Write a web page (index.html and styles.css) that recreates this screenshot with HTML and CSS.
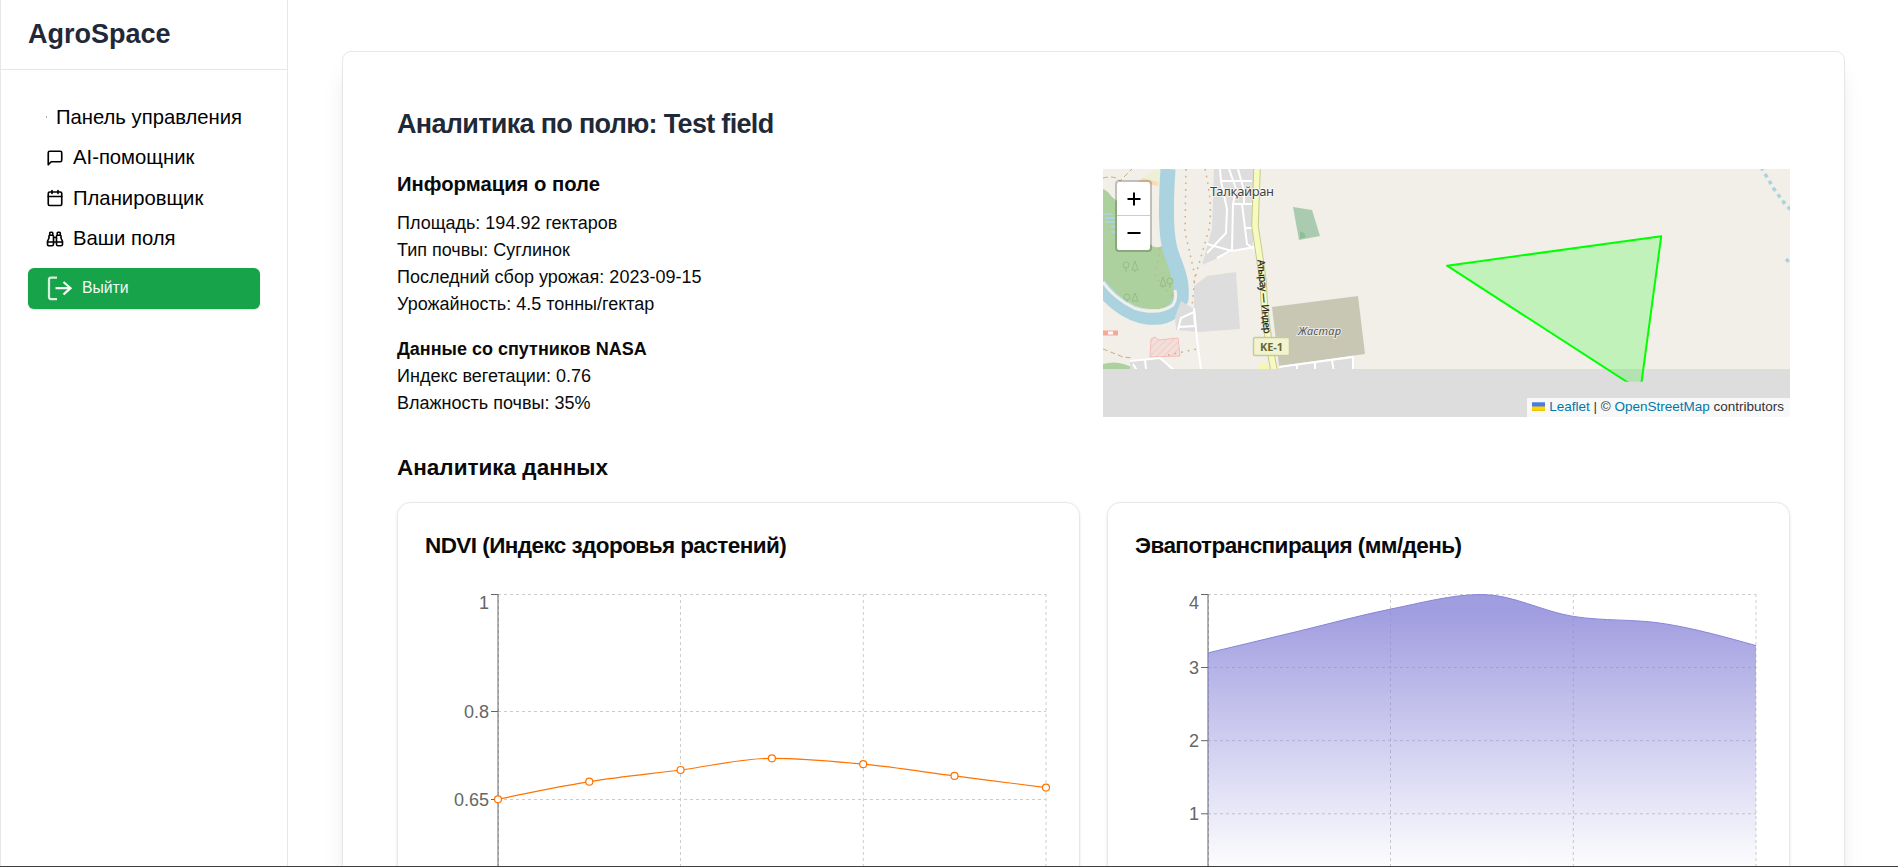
FILE: index.html
```html
<!DOCTYPE html>
<html lang="ru">
<head>
<meta charset="utf-8">
<title>AgroSpace</title>
<link rel="stylesheet" href="styles.css">
</head>
<body>
<div class="app">
  <aside class="sidebar">
    <div class="brand"><span>AgroSpace</span></div>
    <nav class="nav">
      <a class="nav-item"><i class="speck"></i><span>Панель управления</span></a>
      <a class="nav-item"><svg class="icon" viewBox="0 0 24 24"><path d="M21 15a2 2 0 0 1-2 2H7l-4 4V5a2 2 0 0 1 2-2h14a2 2 0 0 1 2 2z"/></svg><span>AI-помощник</span></a>
      <a class="nav-item"><svg class="icon" viewBox="0 0 24 24"><path d="M8 2v4M16 2v4M3 10h18"/><rect x="3" y="4" width="18" height="18" rx="2"/></svg><span>Планировщик</span></a>
      <a class="nav-item"><svg class="icon" viewBox="0 0 24 24"><path d="M10 10h4M19 7V4a1 1 0 0 0-1-1h-2a1 1 0 0 0-1 1v3M20 21a2 2 0 0 0 2-2v-3.851c0-1.39-2-2.962-2-4.829V8a1 1 0 0 0-1-1h-4a1 1 0 0 0-1 1v11a2 2 0 0 0 2 2zM22 16H2M4 21a2 2 0 0 1-2-2v-3.851c0-1.39 2-2.962 2-4.829V8a1 1 0 0 1 1-1h4a1 1 0 0 1 1 1v11a2 2 0 0 1-2 2zM9 7V4a1 1 0 0 0-1-1H6a1 1 0 0 0-1 1v3"/></svg><span>Ваши поля</span></a>
      <button class="logout"><svg viewBox="0 0 27 27"><path class="door" d="M11 2.500H5Q3 2.500 3 4.500V22Q3 24 5 24H11"/><path d="M9.500 13.200H24.500M17.500 7L24.500 13.200L17.500 19.500"/></svg><span>Выйти</span></button>
    </nav>
  </aside>
  <main class="main">
    <section class="card">
      <h1 class="title">Аналитика по полю: Test field</h1>
      <div class="top">
        <div class="info">
          <h2 class="info-title">Информация о поле</h2>
          <p>Площадь: 194.92 гектаров</p>
          <p>Тип почвы: Суглинок</p>
          <p>Последний сбор урожая: 2023-09-15</p>
          <p>Урожайность: 4.5 тонны/гектар</p>
          <h3 class="nasa">Данные со спутников NASA</h3>
          <p>Индекс вегетации: 0.76</p>
          <p>Влажность почвы: 35%</p>
        </div>
        <div class="map">
          <svg class="tiles" viewBox="0 0 687 248">
            <defs><clipPath id="tile"><rect width="687" height="200"/></clipPath><clipPath id="pane"><rect width="687" height="212.700"/></clipPath>
            <pattern id="hatch" width="5" height="5" patternUnits="userSpaceOnUse" patternTransform="rotate(45)"><rect width="5" height="5" fill="#f3dfda"/><path d="M0 0V5" stroke="#f0c8c3" stroke-width="1.500"/></pattern></defs>
            <rect width="687" height="248" fill="#ddd"/>
            <g clip-path="url(#tile)">
              <rect width="687" height="200" fill="#f2efe9"/>
              <path d="M0 20Q5 22 9 28L14 32L48 76Q52 80 59 77Q67 98 72 121Q73 133 62 139Q42 143 27 134Q9 126 0 113Z" fill="#add19e"/>
              <path d="M0 45H9M2 49H12M2 53H13M8 58H12M8 63H12" stroke="#aad3df" stroke-width="2"/>
              <path d="M36 11L52 1H65V13L55 17L35 13Z" fill="#eef0d5"/><path d="M35 13L40 9L55 13V17Z" fill="#fbd9b4"/>
              <path d="M65 0C63 30 62 62 67 80C72 98 80 108 78 130C70 150 54 149 44 148C23 145 9 131 -4 116" fill="none" stroke="#aad3df" stroke-width="15"/>
              <path d="M0 113Q10 128 31 139Q55 147 70 136Q74 130 72 121" fill="none" stroke="#f2efe9" stroke-width="3"/>
              <path d="M111 0H152V67L149 77L131 82L99 96L109 60Z" fill="#ddd"/>
              <path d="M91 117L104 107L133 103L137 160L96 163L73 161L72 148L78 132L91 140Z" fill="#dedddd"/>
              <path d="M190 38L209 41L217 67L196 71Z" fill="#aacbaf"/><path d="M197 62L201 64L203 68L197 70Z" fill="#8fbc9b"/>
              <path d="M169 138L255 127L262 185L176 197Z" fill="#c7c7b4"/>
              <path d="M0 195Q17 190 34 201H0Z" fill="#add19e"/><path d="M27 201V192L58 189L68 201ZM176 198L249 188L252 201H176Z" fill="#ddd"/>
              <path d="M48 170L52 168L56 171L75 169L77 187L47 188Z" fill="url(#hatch)" stroke="#f5beb9"/>
              <path d="M0 164H15" stroke="#f5a799" stroke-width="5"/><path d="M5 164H10" stroke="#fff" stroke-width="3"/>
              <g fill="none" stroke="#fff" stroke-width="2"><path d="M117 0L118 12L124 40L123 64L104 84M118 12H149M126 0L133 20L130 35L129 81L114 89M135 0L141 22V35H151M131 35H139L144 75L151 80M104 75L129 82L152 78M143 59H152M91 139L94 170L98 201M75 161L78 149L91 143L92 157L76 158ZM27 192L57 189L72 202M42 190L43 201M30 195L35 203M176 198L250 188V201M194 195V203M212 193V203M229 191L231 203"/></g>
              <g fill="none" stroke="#ccb08a" stroke-width="1.500" stroke-dasharray="1.700 5"><path d="M83 0L82 63L92 107L89 137M102 0Q110 35 106 60L90 116M57 79L52 108L70 128M65 186L94 180"/></g>
              <path d="M0 9Q12 6 17 12L29 0M0 180L20 188L30 189" fill="none" stroke="#c9aa85" stroke-dasharray="5 3"/>
              <path d="M154 0L152 57Q157 90 160 112Q162 160 171 201" fill="none" stroke="#c7ca8f" stroke-width="7.500"/><path d="M154 0L152 57Q157 90 160 112Q162 160 171 201" fill="none" stroke="#f7fabf" stroke-width="5.500"/>
              <rect x="157" y="195" width="7" height="8" fill="#f8f6a8"/>
              <g fill="none" stroke="#93bd86"><circle cx="23" cy="96" r="3"/><path d="M23 99V103M32 92L29 101H35ZM32 101V103"/><circle cx="67" cy="112" r="3"/><path d="M67 115V119M60 108L57 117H63ZM60 117V119"/><circle cx="24" cy="128" r="3"/><path d="M24 131V133M32 124L29 132H35Z"/></g>
              <path d="M658 -2L671 20L682 35L689 42M683 90L689 96" fill="none" stroke="#aad3df" stroke-width="3.500" stroke-dasharray="4 4"/>
              <g class="map-text"><text x="107" y="27" textLength="64" class="halo">Талқайран</text><text x="195" y="166" textLength="43" class="jastar">Жастар</text>
              <text transform="translate(154.500 91) rotate(85)" textLength="74" class="road">Атырау — Индер</text></g>
              <rect x="150.500" y="168.500" width="36" height="18" rx="1.500" fill="#f2f3d3" stroke="#c8cc94" stroke-width="1.500"/><text x="157" y="182" textLength="23" class="ref">KE-1</text>
            </g>
            <g clip-path="url(#pane)"><polygon class="field" points="344,96.700 558.200,67.300 537.400,221.600"/></g>
          </svg>
          <div class="zoom"><span><svg viewBox="0 0 14 14"><path d="M7 0.500V13.500M0.500 7H13.500"/></svg></span><span><svg viewBox="0 0 14 14"><path d="M0.500 7H13.500"/></svg></span></div>
          <div class="attribution"><svg viewBox="0 0 14 9"><path fill="#4C7BE1" d="M0 0h14v5H0z"/><path fill="#FFD500" d="M0 4.500h14V9H0z"/><path fill="#E0BC00" d="M0 8h14v1H0z"/></svg><span class="attr"><a>Leaflet</a> | © <a>OpenStreetMap</a> contributors</span></div>
        </div>
      </div>
      <h2 class="section-title"><span>Аналитика данных</span></h2>
      <div class="charts">
        <article class="panel">
          <h3><span>NDVI (Индекс здоровья растений)</span></h3>
          <svg class="chart" viewBox="425 588 627 339">
            <g class="grid"><path d="M498 594.500H1046M498 711.500H1046M498 799.500H1046M498.500 594V887M680.500 594V887M863.300 594V887M1046 594V887"/></g>
            <g class="axis"><path d="M498 594V887M491 594.500H498M491 711.500H498M491 799.500H498"/></g>
            <g class="tick"><text x="489" y="608.500">1</text><text x="489" y="717.500">0.8</text><text x="489" y="805.500">0.65</text></g>
            <path class="line" d="M498 799.300C528.430 793 558.870 786.600 589.300 781.700C619.730 776.800 650.170 773.900 680.600 770C711 766.100 741.500 758.300 771.900 758.300C802.300 758.300 832.800 761.200 863.200 764.200C893.600 767.100 924.100 772 954.500 775.900C985 779.800 1015.600 783.700 1046 787.600"/>
            <g class="dot"><circle cx="498" cy="799.300" r="3.500"/><circle cx="589.300" cy="781.700" r="3.500"/><circle cx="680.600" cy="770" r="3.500"/><circle cx="771.900" cy="758.300" r="3.500"/><circle cx="863.200" cy="764.200" r="3.500"/><circle cx="954.500" cy="775.900" r="3.500"/><circle cx="1046" cy="787.600" r="3.500"/></g>
          </svg>
        </article>
        <article class="panel">
          <h3><span>Эвапотранспирация (мм/день)</span></h3>
          <svg class="chart" viewBox="1135 588 627 339">
            <defs><linearGradient id="et" x1="0" y1="0" x2="0" y2="1"><stop offset="5%" stop-color="#8884d8" stop-opacity=".8"/><stop offset="95%" stop-color="#8884d8" stop-opacity="0"/></linearGradient></defs>
            <g class="grid"><path d="M1208 594.500H1756M1208 667.500H1756M1208 740.700H1756M1208 813.800H1756M1208.500 594V887M1390.500 594V887M1573.300 594V887M1756 594V887"/></g>
            <g class="axis"><path d="M1208 594V887M1201 594.500H1208M1201 667.500H1208M1201 740.700H1208M1201 813.800H1208"/></g>
            <g class="tick"><text x="1199" y="608.500">4</text><text x="1199" y="673.500">3</text><text x="1199" y="746.500">2</text><text x="1199" y="819.500">1</text></g>
            <path fill="url(#et)" d="M1208 652.900C1238.400 645.600 1268.900 638.300 1299.300 631C1329.700 623.700 1360.200 615.200 1390.600 609.100C1421 603 1451.500 594.500 1481.900 594.500C1512.300 594.500 1542.800 611.500 1573.200 616.400C1603.600 621.300 1634.100 618.800 1664.500 623.700C1695 628.600 1725.600 637.100 1756 645.600V887H1208Z"/>
            <path class="line violet" d="M1208 652.900C1238.400 645.600 1268.900 638.300 1299.300 631C1329.700 623.700 1360.200 615.200 1390.600 609.100C1421 603 1451.500 594.500 1481.900 594.500C1512.300 594.500 1542.800 611.500 1573.200 616.400C1603.600 621.300 1634.100 618.800 1664.500 623.700C1695 628.600 1725.600 637.100 1756 645.600"/>
          </svg>
        </article>
      </div>
    </section>
  </main>
</div>
</body>
</html>
```
FILE: styles.css
```css
*{box-sizing:border-box;margin:0;padding:0}
html{font-size:18px}
body{height:867px;overflow:hidden;font-family:"Liberation Sans",Arial,sans-serif;line-height:27px;color:#0a0a0a;background:#fff}
.app{display:flex;height:867px;overflow:hidden;border-bottom:1px solid #3c4043}
.sidebar{width:288px;flex:none;border-left:1px solid #e5e7eb;border-right:1px solid #e5e7eb}
.brand{height:70px;padding:16px 27px 0;border-bottom:1px solid #e5e7eb;font-size:27px;line-height:36px;font-weight:700;color:#1f2937}
.nav{padding:27px;display:flex;flex-direction:column}
.nav-item{height:40.5px;padding:0 18px;display:flex;align-items:center;gap:9px;font-size:20.25px;white-space:nowrap;color:#000}
.icon{width:18px;height:18px;fill:none;stroke:currentColor;stroke-width:2.2;stroke-linecap:round;stroke-linejoin:round}
.speck{width:1px;height:2px;background:#aaa}
.logout{margin-top:9px;height:41px;padding:0 18px 1px;border:0;border-radius:6px;background:#16a34a;color:#f4fbf4;display:flex;align-items:center;gap:9px;font:15.75px "Liberation Sans",Arial,sans-serif;box-shadow:0 1px 2px #0002}
.logout svg{width:27px;height:27px;fill:none;stroke:currentColor;stroke-width:2.25}
.logout .door{stroke:#d9eedd}
.main{flex:1;padding:51px 53px 0 54px}
.card{height:960px;padding:54px;border:1px solid #e5e7eb;border-radius:9px;box-shadow:0 20px 25px -5px #0000001a,0 8px 10px -6px #0000001a}
.title{font-size:27px;line-height:36px;font-weight:700;letter-spacing:-.025em;color:#1f2937}
.top{display:flex;justify-content:space-between;margin-top:27px}
.info{font-size:18px}
.info-title{font-size:20.25px;line-height:31.5px;font-weight:700;margin-bottom:9px}
.nasa{font-size:18px;line-height:27px;font-weight:700;margin-top:18px}
.map{position:relative;width:687px;height:248px;overflow:hidden}
.tiles{display:block;width:687px;height:248px}
.field{fill:#0f0;fill-opacity:.2;stroke:#0f0;stroke-width:2;stroke-linejoin:round}
.map-text,.ref{font-family:"Noto Sans",sans-serif;fill:#444;font-size:13px}
.halo{stroke:#fff9;stroke-width:2;paint-order:stroke}
.jastar{font-size:11px;font-style:italic;fill:#555;stroke:#fff9;stroke-width:2;paint-order:stroke}
.road{font-size:10px;fill:#222;stroke:#222;stroke-width:.2}
.ref{font-size:11px;font-weight:700;fill:#666a35}
.zoom{position:absolute;left:12px;top:11px;width:37px;height:72px;border:2px solid #0003;border-radius:4px;background:#fff;background-clip:padding-box;display:flex;flex-direction:column}
.zoom span{height:34px;display:flex;align-items:center;justify-content:center}
.zoom span:first-child{border-bottom:1px solid #ccc}
.zoom svg{width:14px;height:14px;fill:none;stroke:#000;stroke-width:2}
.attribution{position:absolute;right:0;bottom:0;width:263px;height:19px;padding:0 6px 2px 5px;background:#fffc;display:flex;align-items:center;gap:4px;font-size:13.5px;line-height:17px;color:#333;white-space:nowrap}
.attribution svg{width:14px;height:9px}
.attribution a{color:#0078a8}
.section-title{font-size:22.5px;line-height:31.5px;font-weight:700;margin-top:35px}
.charts{display:grid;grid-template-columns:683px 683px;gap:27px;margin-top:18px}
.panel{height:480px;padding:27px;border:1px solid #e5e7eb;border-radius:13.5px;box-shadow:0 1px 3px #0000001a}
.panel h3{font-size:22.5px;line-height:31.5px;font-weight:700;letter-spacing:-.025em}
.chart{display:block;width:627px;height:339px;margin-top:27px}
.grid path{fill:none;stroke:#ccc;stroke-dasharray:3 3}
.axis path{fill:none;stroke:#666}
.tick{font-size:18px;fill:#666;text-anchor:end}
.line{fill:none;stroke:#ff7300;stroke-width:1.2}
.violet{stroke:#8884d8;stroke-width:1}
.dot circle{fill:#fff;stroke:#ff7300;stroke-width:1.2}
```
